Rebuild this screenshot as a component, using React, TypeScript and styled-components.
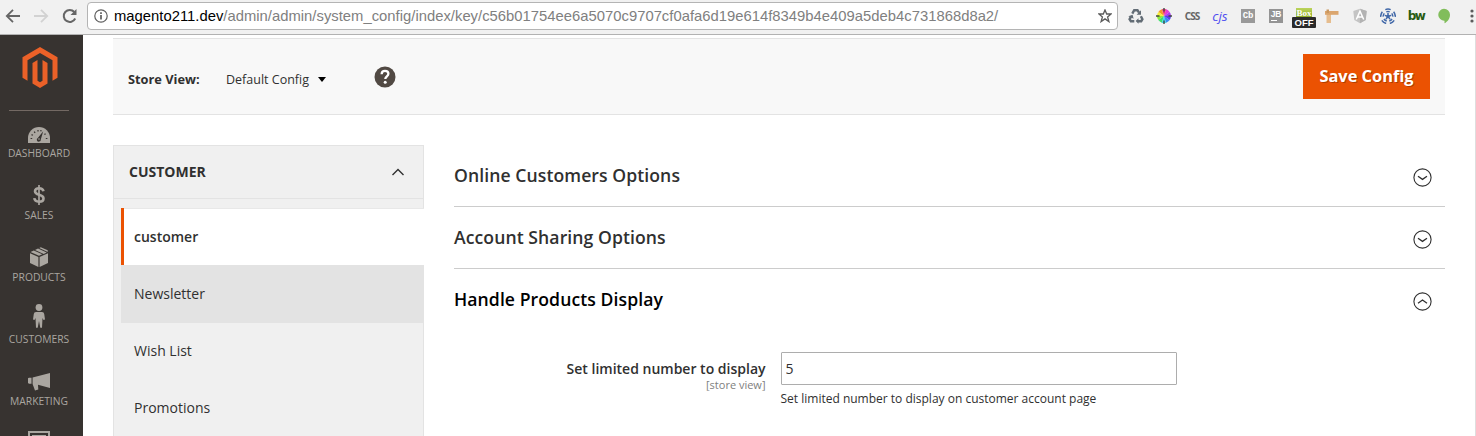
import React from "react";
import styled, { createGlobalStyle, css } from "styled-components";

const Global = createGlobalStyle`
  * { box-sizing: border-box; }
  body { margin: 0; background: #fff; overflow: hidden; }
`;

const Page = styled.div`
  width: 1476px;
  height: 436px;
  display: flex;
  flex-direction: column;
  overflow: hidden;
  font-family: "Open Sans", "Noto Sans", sans-serif;
  color: #303030;
`;

/* ---------- browser chrome ---------- */
const BrowserBar = styled.header`
  height: 35px;
  flex: none;
  display: flex;
  align-items: flex-start;
  background: #f1f1f1;
  border-bottom: 1px solid #b2b2b2;
`;
const NavButtons = styled.div`
  width: 87px;
  flex: none;
  height: 32px;
  padding-left: 5px;
  display: flex;
  align-items: center;
  gap: 12px;
`;
const AddressBar = styled.div`
  width: 1031px;
  flex: none;
  height: 28px;
  margin-top: 2px;
  padding: 0 5px 0 6px;
  display: flex;
  align-items: center;
  background: #fff;
  border: 1px solid #b4b4b4;
  border-radius: 4px;
`;
const Url = styled.span`
  flex: 1;
  margin-left: 6px;
  font: 14.8px/20px "Liberation Sans", Arial, sans-serif;
  letter-spacing: 0.015px;
  white-space: nowrap;
  color: #808080;
`;
const Host = styled.span`
  color: #000;
`;
const Extensions = styled.div`
  height: 32px;
  flex: 1;
  min-width: 0;
  padding-left: 4px;
  display: flex;
  align-items: center;
`;
const Extension = styled.div`
  width: 28px;
  flex: none;
  display: flex;
  justify-content: center;
  align-items: center;
`;
const TextGlyph = styled.span<{ $color: string; $size: number; $family?: string; $italic?: boolean; $weight?: number; $tracking?: number }>`
  font-family: ${(p) => p.$family ?? '"Open Sans", sans-serif'};
  font-size: ${(p) => p.$size}px;
  line-height: 16px;
  font-style: ${(p) => (p.$italic ? "italic" : "normal")};
  font-weight: ${(p) => p.$weight ?? 400};
  letter-spacing: ${(p) => p.$tracking ?? 0}px;
  color: ${(p) => p.$color};
`;
const Tile = styled.span`
  width: 14px;
  height: 14px;
  display: flex;
  justify-content: center;
  background: #999;
  color: #fff;
  font: 700 9px/14px "Liberation Mono", monospace;
  letter-spacing: -0.2px;
`;
const UnderlinedTile = styled(Tile)`
  font: 700 8.5px/11px "Liberation Sans", sans-serif;
  background: linear-gradient(#fff, #fff) 2px 11px / 6px 1px no-repeat #949494;
`;
const BoxBadge = styled.span`
  width: 24px;
  height: 20px;
  margin-top: 4px;
  display: flex;
  flex-direction: column;
  align-items: center;
`;
const BoxTop = styled.span`
  width: 16px;
  height: 9px;
  overflow: hidden;
  text-align: center;
  background: linear-gradient(#bcd45c, #8fae2a);
  color: #fff;
  font: 700 9px/11px "Liberation Serif", serif;
`;
const BoxState = styled.span`
  width: 24px;
  height: 11px;
  border-radius: 1px;
  background: #2b2b2b;
  color: #fff;
  text-align: center;
  font: 700 9.5px/12px "Liberation Sans", Arial, sans-serif;
`;

/* ---------- admin shell ---------- */
const Body = styled.div`
  flex: 1;
  min-height: 0;
  display: flex;
`;
const Sidebar = styled.nav`
  width: 83px;
  flex: none;
  display: flex;
  flex-direction: column;
  align-items: center;
  overflow: hidden;
  padding-right: 5px;
  background: #373330;
`;
const LogoArea = styled.div`
  width: 60px;
  height: 76px;
  flex: none;
  padding: 12px 0 0 1px;
  display: flex;
  justify-content: center;
  align-items: flex-start;
  border-bottom: 1px solid #736963;
`;
const MenuItem = styled.a`
  height: 62px;
  flex: none;
  display: flex;
  flex-direction: column;
  align-items: center;
  color: #aaa6a0;
`;
const MenuIcon = styled.span<{ $lift: number }>`
  height: 35px;
  padding-bottom: ${(p) => p.$lift}px;
  display: flex;
  align-items: flex-end;
`;
const MenuLabel = styled.span`
  font-size: 10.3px;
  line-height: 14px;
  white-space: nowrap;
`;
const Main = styled.main`
  flex: 1;
  min-width: 0;
  padding: 3px 30px 0;
  border-right: 1px solid #dedede;
  background: #fff;
`;
const Toolbar = styled.section`
  width: 1332px;
  height: 77px;
  padding: 0 15px;
  display: flex;
  align-items: center;
  background: #f8f8f8;
  border-top: 1px solid #e3e3e3;
  border-bottom: 1px solid #e3e3e3;
`;
const ScopeLabel = styled.span`
  width: 98px;
  padding-top: 4px;
  font-size: 12.8px;
  font-weight: 700;
`;
const ScopeValue = styled.span`
  width: 148px;
  padding-top: 6px;
  display: flex;
  align-items: center;
  gap: 9px;
  font-size: 12.5px;
`;
const SaveButton = styled.button`
  width: 127px;
  height: 45px;
  margin: 0 0 0 auto;
  padding: 0 0 2px;
  border: 0;
  background: #eb5202;
  color: #fff;
  font: 700 16.4px/43px "Open Sans", sans-serif;
  text-shadow: 1px 1px 0 rgba(0, 0, 0, 0.25);
`;
const Columns = styled.div`
  width: 1332px;
  margin-top: 30px;
  display: flex;
  gap: 30px;
`;
const ConfigNav = styled.aside`
  width: 311px;
  height: 300px;
  flex: none;
  background: #f0f0f0;
  border: 1px solid #e3e3e3;
`;
const ConfigNavTitle = styled.div`
  height: 53px;
  padding: 0 18px 2px 15px;
  display: flex;
  align-items: center;
  justify-content: space-between;
  border-bottom: 1px solid #e3e3e3;
  font-size: 14px;
  font-weight: 700;

  svg {
    margin-top: 2px;
  }
`;
const ConfigList = styled.div`
  padding: 9px 0 0 7px;
  margin-right: -1px;
`;
const ConfigItem = styled.a<{ $state?: "active" | "hover" }>`
  height: 57px;
  padding-left: 13px;
  display: flex;
  align-items: center;
  font-size: 14px;
  ${(p) =>
    p.$state === "active" &&
    css`
      padding-left: 10px;
      background: #fff;
      border-left: 3px solid #eb5202;
      box-shadow: inset 0 1px 0 #e8e8e8;
      font-weight: 600;
    `}
  ${(p) =>
    p.$state === "hover" &&
    css`
      height: 58px;
      margin-bottom: -1px;
      padding-bottom: 2px;
      background: #e3e3e3;
    `}
`;
const Sections = styled.div`
  flex: 1;
`;
const SectionHead = styled.div<{ $open?: boolean }>`
  height: 62px;
  padding: 0 13px 1px 0;
  display: flex;
  align-items: center;
  justify-content: space-between;
  border-bottom: 1px solid ${(p) => (p.$open ? "transparent" : "#cccccc")};
  color: ${(p) => (p.$open ? "#000" : "#303030")};
  font-size: 17.6px;
  font-weight: 600;
  letter-spacing: 0.08px;

  svg {
    margin-top: 4px;
  }
`;
const Field = styled.div`
  margin-top: 21px;
  display: flex;
  gap: 15px;
`;
const FieldLabel = styled.label`
  width: 311.5px;
  padding-top: 7px;
  display: flex;
  flex-direction: column;
  align-items: flex-end;
  font-size: 14px;
  line-height: 20px;
  font-weight: 600;
`;
const ScopeHint = styled.span`
  font-size: 11px;
  line-height: 11px;
  font-weight: 400;
  color: #808080;
`;
const FieldControl = styled.div`
  display: flex;
  flex-direction: column;
`;
const TextInput = styled.input`
  width: 396px;
  height: 33px;
  padding: 0 4px;
  border: 1px solid #adadad;
  border-radius: 1px;
  outline: 0;
  background: #fff;
  color: #303030;
  font: 14px "Open Sans", sans-serif;
`;
const Note = styled.p`
  margin: 5px 0 0;
  font-size: 12px;
  line-height: 17px;
`;

const Chevron = ({ open }: { open: boolean }) => (
  <svg width="19" height="19" viewBox="0 0 19 19" fill="none" stroke="#303030" strokeWidth="1.1">
    <circle cx="9.5" cy="9.5" r="8.6" />
    <path d={open ? "M5 11.2 9.5 8l4.5 3.2" : "M5 8.2l4.5 3.2L14 8.2"} strokeWidth="1.3" />
  </svg>
);

const wheel = ["#e33bd8", "#f0357a", "#f59a2a", "#f4ee3a", "#8eea35", "#3ce06a", "#33d8e8", "#388af5", "#5540ee", "#a53df0"];
const polar = (r: number, deg: number) => {
  const a = (deg * Math.PI) / 180;
  return `${8 + r * Math.cos(a)} ${8 + r * Math.sin(a)}`;
};

const ColorWheel = () => (
  <svg width="16" height="16" viewBox="0 0 16 16">
    {wheel.map((c, i) => (
      <path key={c} fill={c} d={`M8 8L${polar(7, -36 - i * 36)}A7 7 0 0 0 ${polar(7, -72 - i * 36)}Z`} />
    ))}
    <path d="M8 0v3.500M8 12.500v3.500M0 8h3.500M12.500 8h3.500" stroke="#444" strokeWidth="1.400" />
  </svg>
);

const Recycle = () => (
  <svg width="16" height="16" viewBox="0 0 16 16" fill="none" stroke="#626c75" strokeWidth="2.400">
    <path d="M4.300 5.600 6.200 2.200h3.300l1.500 2.500" />
    <path d="M12.900 8.300l1.500 2.900-1.200 2H10" />
    <path d="M6.300 13.200H2.900L1.600 11.200 3 8.600" />
    <path d="M13 2.300v4.400H8.600zM10.500 10.300v5.500L7.600 13.100zM.3 8.300l4.300-1.500 1 4z" fill="#626c75" stroke="none" />
  </svg>
);

const RadialFan = () => (
  <svg width="16" height="16" viewBox="0 0 16 16">
    <g fill="none" stroke="#4168a8" strokeWidth="1.500">
      {[0, 72, 144, 216, 288].map((a) => (
        <g key={a} transform={`rotate(${a} 8 8.400)`}>
          <path d="M5.300 1.600q2.700-1 5.400 0M6.300 3.900q1.700-.6 3.400 0M8 5v3" />
        </g>
      ))}
    </g>
    <circle cx="8" cy="8.400" r="1.600" fill="#4168a8" />
  </svg>
);

const DashboardIcon = () => (
  <svg width="22" height="16" viewBox="0 0 22 16">
    <path d="M0 16v-5a11 11 0 0 1 22 0v5z" fill="currentColor" />
    <path d="M15.2 4.2 12.8 12.4a2 2 0 1 1-3-1.5z" fill="#373330" />
    <circle cx="11" cy="12" r=".8" fill="currentColor" />
    <path d="M2.6 11.5h1.6M3.5 7.6l1.4.7M6.2 4.6l.9 1.3M10 3v1.6M13 3l-.2 1.4M17.6 6.7l-1.2.9M17.8 11.5h1.6" stroke="#373330" strokeWidth="1.2" />
  </svg>
);
const DollarIcon = () => (
  <svg width="12" height="20" viewBox="0 0 12 20" fill="none" stroke="currentColor">
    <path d="M10.500 6.200C10 4.100 8.400 3.300 6 3.300c-2.600 0-4 1.200-4 3 0 4.600 8.500 2.400 8.500 7.200 0 2-1.700 3.200-4.400 3.200-2.700 0-4.500-1.100-4.800-3.500" strokeWidth="2.600" />
    <path d="M6 0v20" strokeWidth="1.700" />
  </svg>
);
const ProductsIcon = () => (
  <svg width="18" height="20" viewBox="0 0 18 20" fill="currentColor">
    <path d="M0 6.200 8.400 10v10L0 16zM9.600 10 18 6.200V16l-8.400 4zM.5 5 3.800 3.500 12.300 7.300 9 8.800zM5 3 8 1.600l8.700 3.900-3 1.400zM9.200 1.100l1.600-.9L17.700 3.300v1.600z" />
  </svg>
);
const PersonIcon = () => (
  <svg width="12" height="24" viewBox="0 0 12 24" fill="currentColor">
    <circle cx="6" cy="3.500" r="3.400" />
    <path d="M3 8h6q2 0 2.200 2L12 15.500l-1.500.6L9.500 14 9 23.800H7.300L6 17l-1.300 6.800H3L2.500 14l-1 2.100L0 15.500 .8 10Q1 8 3 8z" />
  </svg>
);
const MegaphoneIcon = () => (
  <svg width="22" height="18" viewBox="0 0 22 18" fill="currentColor">
    <path d="M0 5.300 1 4.700H3.500v6H1L0 10zM4.600 4.400 22 0v15L10 11.700l.3 4.800-3.300 1L4.600 11z" />
  </svg>
);
const ContentIcon = () => (
  <svg width="22" height="20" viewBox="0 0 22 20" fill="none" stroke="currentColor">
    <rect x="1" y="1" width="20" height="17" strokeWidth="2" />
    <path d="M4 4.800h14M4 8h14M4 11h14" strokeWidth="1.800" />
  </svg>
);

const menu = [
  { label: "DASHBOARD", icon: <DashboardIcon />, lift: 3 },
  { label: "SALES", icon: <DollarIcon />, lift: 3 },
  { label: "PRODUCTS", icon: <ProductsIcon />, lift: 3 },
  { label: "CUSTOMERS", icon: <PersonIcon />, lift: 4 },
  { label: "MARKETING", icon: <MegaphoneIcon />, lift: 3 },
];

const ContentSlot = styled(MenuItem)`
  padding-top: 10px;
`;

export default function App() {
  return (
    <>
      <Global />
      <Page>
        <BrowserBar>
          <NavButtons>
            <svg width="16" height="16" viewBox="0 0 16 16" fill="none" stroke="#666" strokeWidth="1.800">
              <path d="M15 8H2M8 1.800 1.800 8 8 14.200" />
            </svg>
            <svg width="16" height="16" viewBox="0 0 16 16" fill="none" stroke="#d2d2d2" strokeWidth="1.800">
              <path d="M1 8h13M8 1.800 14.200 8 8 14.200" />
            </svg>
            <svg width="18" height="16" viewBox="0 0 18 16" fill="none" stroke="#666" strokeWidth="2">
              <path d="M14.200 10.500A6 6 0 1 1 13.300 4" />
              <path d="M15.500 1v6h-6z" fill="#666" stroke="none" />
            </svg>
          </NavButtons>
          <AddressBar>
            <svg width="14" height="14" viewBox="0 0 14 14" fill="none" stroke="#5f5f5f">
              <circle cx="7" cy="7" r="6.200" strokeWidth="1.200" />
              <path d="M7 6v4.500M7 3.200v1.700" strokeWidth="1.700" />
            </svg>
            <Url>
              <Host>magento211.dev</Host>
              /admin/admin/system_config/index/key/c56b01754ee6a5070c9707cf0afa6d19e614f8349b4e409a5deb4c731868d8a2/
            </Url>
            <svg width="14" height="14" viewBox="0 0 14 14" fill="none" stroke="#5c5c5c" strokeWidth="1.300">
              <path d="M7 .9 8.700 5h4.400L9.600 7.900l1.300 4.700L7 9.900l-3.900 2.700 1.300-4.700L.9 5h4.400z" />
            </svg>
          </AddressBar>
          <Extensions>
            <Extension><Recycle /></Extension>
            <Extension><ColorWheel /></Extension>
            <Extension>
              <TextGlyph $color="#666" $size={10} $weight={700} $tracking={-0.9} $family='"Noto Sans", sans-serif'>CSS</TextGlyph>
            </Extension>
            <Extension>
              <TextGlyph $color="#5050f0" $size={13.5} $italic>cjs</TextGlyph>
            </Extension>
            <Extension><Tile>Cb</Tile></Extension>
            <Extension><UnderlinedTile>JB</UnderlinedTile></Extension>
            <Extension>
              <BoxBadge>
                <BoxTop>Box</BoxTop>
                <BoxState>OFF</BoxState>
              </BoxBadge>
            </Extension>
            <Extension>
              <svg width="16" height="16" viewBox="0 0 16 16">
                <path d="M2.500 3H7v12H2.500z" fill="#e6bd8e" />
                <path d="M1 3h13.500v3.800H1z" fill="#dba66f" />
                <path d="M2.500 1.500H5v3.500H2.500z" fill="#c9975f" />
              </svg>
            </Extension>
            <Extension>
              <svg width="16" height="16" viewBox="0 0 16 16">
                <path d="M8 .8l6.700 2.300-1 9L8 15.300l-5.700-3.200-1-9z" fill="#c4c4c4" />
                <path d="M8 .8l6.700 2.300-1 9L8 15.300z" fill="#b3b3b3" />
                <path d="M4.300 11.500 8 3.200l3.700 8.300M5.800 9h4.400" fill="none" stroke="#fff" strokeWidth="1.500" />
              </svg>
            </Extension>
            <Extension><RadialFan /></Extension>
            <Extension>
              <TextGlyph $color="#285b12" $size={12} $weight={700} $tracking={-1.6} $family='"DejaVu Sans", sans-serif'>bw</TextGlyph>
            </Extension>
            <Extension>
              <svg width="14" height="16" viewBox="0 0 14 16">
                <path d="M7 .7a6 6 0 0 1 6 6c0 4-2.500 6.800-5.500 8.600v-2.600A6 6 0 0 1 7 .7z" fill="#81bd5b" />
              </svg>
            </Extension>
            <Extension>
              <svg width="4" height="16" viewBox="0 0 4 16" fill="#5c5c5c">
                <circle cx="2" cy="3" r="1.600" />
                <circle cx="2" cy="8" r="1.600" />
                <circle cx="2" cy="13" r="1.600" />
              </svg>
            </Extension>
          </Extensions>
        </BrowserBar>
        <Body>
          <Sidebar>
            <LogoArea>
              <svg width="36" height="41" viewBox="0 0 36 41" fill="#eb6128">
                <path d="M18 0 35.500 10.300v20.400l-5 3V13.200L18 6 5.500 13.200v20.500l-5-3V10.300z" />
                <path d="M10.500 16l5-3v20.700l2.500 1.500 2.500-1.500V13l5 3v20.500L18 41l-7.500-4.500z" />
              </svg>
            </LogoArea>
            {menu.map((m) => (
              <MenuItem key={m.label}>
                <MenuIcon $lift={m.lift}>{m.icon}</MenuIcon>
                <MenuLabel>{m.label}</MenuLabel>
              </MenuItem>
            ))}
            <ContentSlot>
              <ContentIcon />
            </ContentSlot>
          </Sidebar>
          <Main>
            <Toolbar>
              <ScopeLabel>Store View:</ScopeLabel>
              <ScopeValue>
                Default Config
                <svg width="8" height="5" viewBox="0 0 8 5">
                  <path d="M0 0h8L4 5z" fill="#000" />
                </svg>
              </ScopeValue>
              <svg width="22" height="22" viewBox="0 0 22 22">
                <circle cx="11" cy="11" r="10.500" fill="#514943" />
                <path d="M7.600 8.200C7.700 5.800 9.200 4.900 11 4.900c2 0 3.400 1.100 3.400 2.900 0 2.500-3.100 2.600-3.100 5.300" fill="none" stroke="#fff" strokeWidth="2.300" />
                <circle cx="11.200" cy="16.300" r="1.500" fill="#fff" />
              </svg>
              <SaveButton>Save Config</SaveButton>
            </Toolbar>
            <Columns>
              <ConfigNav>
                <ConfigNavTitle>
                  CUSTOMER
                  <svg width="14" height="8" viewBox="0 0 14 8" fill="none" stroke="#303030" strokeWidth="1.400">
                    <path d="M1.500 7 7 1.500 12.500 7" />
                  </svg>
                </ConfigNavTitle>
                <ConfigList>
                  <ConfigItem $state="active">customer</ConfigItem>
                  <ConfigItem $state="hover">Newsletter</ConfigItem>
                  <ConfigItem>Wish List</ConfigItem>
                  <ConfigItem>Promotions</ConfigItem>
                </ConfigList>
              </ConfigNav>
              <Sections>
                <SectionHead>Online Customers Options<Chevron open={false} /></SectionHead>
                <SectionHead>Account Sharing Options<Chevron open={false} /></SectionHead>
                <SectionHead $open>Handle Products Display<Chevron open /></SectionHead>
                <Field>
                  <FieldLabel>
                    Set limited number to display
                    <ScopeHint>[store view]</ScopeHint>
                  </FieldLabel>
                  <FieldControl>
                    <TextInput defaultValue="5" />
                    <Note>Set limited number to display on customer account page</Note>
                  </FieldControl>
                </Field>
              </Sections>
            </Columns>
          </Main>
        </Body>
      </Page>
    </>
  );
}
